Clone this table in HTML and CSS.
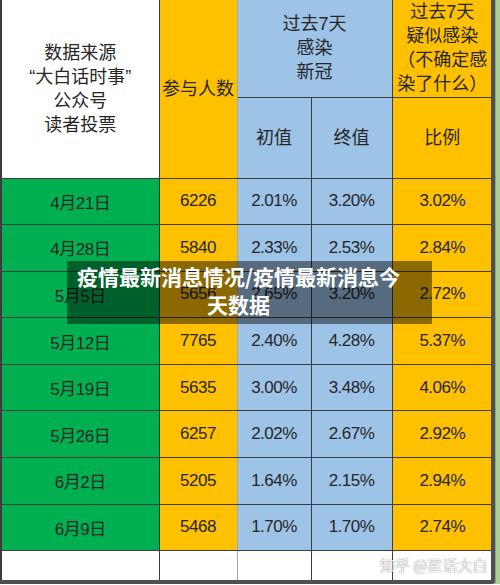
FILE: index.html
```html
<!DOCTYPE html>
<html lang="zh-CN">
<head>
  <meta charset="UTF-8">
  <meta name="viewport" content="width=device-width, initial-scale=1.0">
  <title>疫情最新消息情况</title>
  <link rel="stylesheet" href="styles.css">
</head>
<body>
  <div class="sheet">
    <div class="frame">
      <table class="grid">
        <colgroup>
          <col class="w-src">
          <col class="w-num">
          <col class="w-first">
          <col class="w-last">
          <col class="w-rate">
        </colgroup>
        <thead>
          <tr class="head-top">
            <th rowspan="2" class="white first">数据来源<br>“大白话时事”<br>公众号<br>读者投票</th>
            <th rowspan="2" class="orange soft">参与人数</th>
            <th colspan="2" class="blue">过去7天<br>感染<br>新冠</th>
            <th class="orange rate">过去7天<br>疑似感染<br>（不确定感染了什么）</th>
          </tr>
          <tr class="head-sub">
            <th class="blue">初值</th>
            <th class="blue">终值</th>
            <th class="orange rate">比例</th>
          </tr>
        </thead>
        <tbody>
          <tr><td class="green first">4月21日</td><td class="orange soft">6226</td><td class="blue">2.01%</td><td class="blue">3.20%</td><td class="orange rate">3.02%</td></tr>
          <tr><td class="green first">4月28日</td><td class="orange soft">5840</td><td class="blue">2.33%</td><td class="blue">2.53%</td><td class="orange rate">2.84%</td></tr>
          <tr><td class="green first">5月5日</td><td class="orange soft">5656</td><td class="blue">2.65%</td><td class="blue">3.20%</td><td class="orange rate">2.72%</td></tr>
          <tr><td class="green first">5月12日</td><td class="orange soft">7765</td><td class="blue">2.40%</td><td class="blue">4.28%</td><td class="orange rate">5.37%</td></tr>
          <tr><td class="green first">5月19日</td><td class="orange soft">5635</td><td class="blue">3.00%</td><td class="blue">3.48%</td><td class="orange rate">4.06%</td></tr>
          <tr><td class="green first">5月26日</td><td class="orange soft">6257</td><td class="blue">2.02%</td><td class="blue">2.67%</td><td class="orange rate">2.92%</td></tr>
          <tr><td class="green first">6月2日</td><td class="orange soft">5205</td><td class="blue">1.64%</td><td class="blue">2.15%</td><td class="orange rate">2.94%</td></tr>
          <tr><td class="green first">6月9日</td><td class="orange soft">5468</td><td class="blue">1.70%</td><td class="blue">1.70%</td><td class="orange rate">2.74%</td></tr>
          <tr class="blank"><td class="first"></td><td class="soft"></td><td></td><td></td><td class="rate"></td></tr>
        </tbody>
      </table>
    </div>
    <div class="side"></div>
  </div>

  <div class="below">
    <span></span><span></span><span></span><span></span><span></span><span></span>
  </div>

  <div class="caption">疫情最新消息情况/疫情最新消息今天数据</div>
  <div class="mark">知乎 @星话大白</div>
</body>
</html>
```

FILE: styles.css
```css
body {
  margin: 0;
  width: 500px;
  height: 585px;
  overflow: hidden;
  position: relative;
  background-color: white;
  font-family: "Liberation Sans", "Noto Sans CJK SC", sans-serif;
  color: #262626;
}
.sheet {
  display: flex;
}
.frame {
  width: 491px;
  border-right: 4px solid #4f4f4f;
  border-bottom: 4px solid #4f4f4f;
  border-bottom-right-radius: 3px;
  overflow: hidden;
}
.side {
  flex: 1;
  background-color: #a9d08e;
  border-left: 1px solid #9a9a9a;
}
.grid {
  width: 491px;
  border-collapse: collapse;
  table-layout: fixed;
}
.w-src { width: 158px; }
.w-num { width: 78px; }
.w-first { width: 74px; }
.w-last { width: 81px; }
.w-rate { width: 100px; }
.grid th,
.grid td {
  padding: 0;
  border: 1px solid #3c3c3c;
  text-align: center;
  vertical-align: middle;
}
.grid th {
  font-weight: normal;
  font-size: 18px;
  line-height: 24px;
}
.grid td {
  font-size: 17px;
  letter-spacing: -0.5px;
}
.grid thead tr:first-child th {
  border-top: none;
}
.grid .first {
  border-left: 2px solid #3c3c3c;
}
.grid .soft {
  border-right-color: #a8a8a8;
}
.grid .rate {
  border-right: none;
}
.head-top { height: 97px; }
.head-sub { height: 81px; }
.grid tbody tr { height: 46.6px; }
.grid tbody tr.blank { height: 29px; }
.grid tr.blank td {
  border-bottom: none;
}
.white { background-color: white; }
.green { background-color: #00b050; }
.orange { background-color: #ffc000; }
.blue { background-color: #9dc3e6; }

.below {
  display: grid;
  grid-template-columns: 158px 78px 74px 81px 104px 5px;
  height: 5px;
  margin-top: 1px;
  border-top: 1px solid #d0d0d0;
}
.below span {
  border-right: 1px solid #9a9a9a;
}
.below span:first-child {
  border-left: 2px solid #3c3c3c;
}

.caption {
  position: absolute;
  left: 67px;
  top: 261px;
  width: 365px;
  height: 63px;
  box-sizing: border-box;
  padding: 1px 26px 0 4px;
  background-color: rgba(0, 0, 0, 0.45);
  color: white;
  font-family: "Noto Sans CJK SC", sans-serif;
  font-weight: 700;
  font-size: 21px;
  line-height: 28px;
  text-align: center;
}
.mark {
  position: absolute;
  left: 380px;
  top: 554px;
  font-family: "Noto Sans CJK SC", sans-serif;
  font-size: 15px;
  color: rgba(255, 255, 255, 0.92);
  text-shadow: 0 0 1px rgba(0, 0, 0, 0.45), 0 0 2px rgba(0, 0, 0, 0.2);
}
```
